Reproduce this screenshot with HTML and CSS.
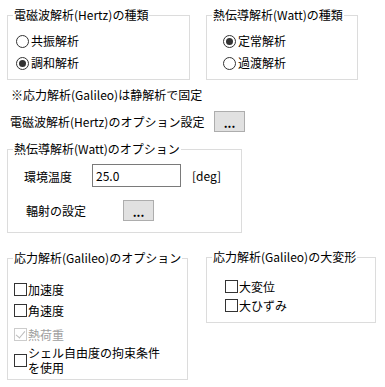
FILE: index.html
```html
<!DOCTYPE html>
<html lang="ja">
<head>
    <meta charset="UTF-8">
    <title>解析オプション</title>
    <link rel="stylesheet" href="styles.css">
</head>
<body>
    <div class="page">
        <!-- 解析の種類 -->
        <div class="top-row">
            <fieldset class="group group-hertz">
                <legend>電磁波解析(Hertz)の種類</legend>
                <label class="radio-row"><input type="radio" name="hertz"><span>共振解析</span></label>
                <label class="radio-row"><input type="radio" name="hertz" checked><span>調和解析</span></label>
            </fieldset>
            <fieldset class="group group-watt">
                <legend>熱伝導解析(Watt)の種類</legend>
                <label class="radio-row"><input type="radio" name="watt" checked><span>定常解析</span></label>
                <label class="radio-row"><input type="radio" name="watt"><span>過渡解析</span></label>
            </fieldset>
        </div>

        <p class="note">※応力解析(Galileo)は静解析で固定</p>

        <div class="option-row">
            <span class="option-label">電磁波解析(Hertz)のオプション設定</span>
            <button class="dots-btn">...</button>
        </div>

        <!-- 熱伝導オプション -->
        <fieldset class="group group-heat">
            <legend>熱伝導解析(Watt)のオプション</legend>
            <div class="field-row temp-row">
                <span class="field-label">環境温度</span>
                <input type="text" class="num-input" value="25.0">
                <span class="unit">[deg]</span>
            </div>
            <div class="field-row rad-row">
                <span class="field-label rad-label">輻射の設定</span>
                <button class="dots-btn">...</button>
            </div>
        </fieldset>

        <div class="bottom-row">
            <fieldset class="group group-stress">
                <legend>応力解析(Galileo)のオプション</legend>
                <label class="check-row"><input type="checkbox"><span>加速度</span></label>
                <label class="check-row"><input type="checkbox"><span>角速度</span></label>
                <label class="check-row row-gap disabled"><input type="checkbox" checked disabled><span>熱荷重</span></label>
                <label class="check-row tall"><input type="checkbox"><span class="two-line"><span>シェル自由度の拘束条件</span><span>を使用</span></span></label>
            </fieldset>
            <fieldset class="group group-large">
                <legend>応力解析(Galileo)の大変形</legend>
                <label class="check-row small"><input type="checkbox"><span>大変位</span></label>
                <label class="check-row small"><input type="checkbox"><span>大ひずみ</span></label>
            </fieldset>
        </div>
    </div>
</body>
</html>
```

FILE: styles.css
```css
* {
    margin: 0;
    padding: 0;
    box-sizing: border-box;
}

body {
    background: #ffffff;
    color: #000000;
    font-family: "Noto Sans CJK JP", "Noto Sans", sans-serif;
    font-size: 12px;
    line-height: 16px;
}

.page {
    padding: 7px 0 0 7px;
}

/* group boxes */
.group {
    border: 1px solid #dcdcdc;
    min-width: 0;
}

.group legend {
    margin-left: 5px;
    padding: 0 1px;
    line-height: 16px;
    height: 16px;
    white-space: nowrap;
}

.top-row {
    display: flex;
    gap: 16px;
}

.group-hertz { width: 183px; height: 73px; padding-top: 7px; }
.group-watt { width: 152px; height: 73px; padding-top: 7px; }
.group-hertz .radio-row { margin-left: 8px; }
.group-watt .radio-row { margin-left: 16px; }

.radio-row {
    display: flex;
    align-items: center;
    height: 22px;
}

.radio-row input {
    appearance: none;
    width: 13px;
    height: 13px;
    border: 1px solid #333;
    border-radius: 50%;
    background: #fff;
    margin-right: 2px;
    display: grid;
    place-items: center;
}

.radio-row input:checked::after {
    content: "";
    width: 7px;
    height: 7px;
    border-radius: 50%;
    background: #333;
}

.note {
    margin: 7px 0 0 4px;
    height: 16px;
}

.option-row {
    display: flex;
    align-items: center;
    height: 21px;
    margin-top: 8px;
}

.option-label {
    width: 207px;
    padding-left: 3px;
}

.dots-btn {
    width: 31px;
    height: 21px;
    background: #e1e1e1;
    border: 1px solid #adadad;
    font-family: inherit;
    font-size: 12px;
    line-height: 16px;
    font-weight: bold;
    color: #000;
    padding-top: 2px;
}

/* heat options */
.group-heat {
    width: 235px;
    height: 92px;
    margin-top: 9px;
    padding-top: 7px;
}

.field-row {
    display: flex;
    align-items: center;
    margin-left: 16px;
}

.temp-row { height: 23px; }
.rad-row { height: 21px; margin-top: 13px; }

.field-label {
    width: 68px;
    padding-top: 3px;
}

.rad-label {
    width: 99px;
    padding-left: 2px;
    padding-top: 0;
}

.num-input {
    width: 89px;
    height: 23px;
    border: 1px solid #7a7a7a;
    padding: 0 3px;
    font-family: inherit;
    font-size: 12px;
    color: #000;
    outline: none;
}

.unit {
    margin-left: 11px;
}

/* stress options */
.bottom-row {
    display: flex;
    align-items: flex-start;
    gap: 18px;
    margin-top: 17px;
}

.group-stress { width: 181px; height: 130px; padding-top: 13px; }
.group-large { width: 170px; height: 74px; margin-top: -1px; padding-top: 12px; }
.group-stress .check-row { margin-left: 6px; }
.group-large .check-row { margin-left: 18px; }

.check-row {
    display: flex;
    align-items: center;
    height: 21px;
}

.check-row.small { height: 19px; }
.check-row.row-gap { margin-top: 3px; }
.check-row.tall { height: 30px; margin-top: 0; }

.two-line {
    display: flex;
    flex-direction: column;
    line-height: 15px;
}

.check-row input {
    appearance: none;
    width: 13px;
    height: 13px;
    border: 1px solid #333;
    background: #fff;
    margin-right: 1px;
    flex-shrink: 0;
    position: relative;
}

.check-row input:disabled {
    border-color: #cccccc;
}

.check-row input:checked::after {
    content: "";
    position: absolute;
    left: 3px;
    top: 0px;
    width: 4px;
    height: 8px;
    border: solid #333;
    border-width: 0 1px 1px 0;
    transform: rotate(40deg);
}

.check-row input:disabled:checked::after {
    border-color: #bcbcbc;
}

.disabled span {
    color: #a0a0a0;
}
```
